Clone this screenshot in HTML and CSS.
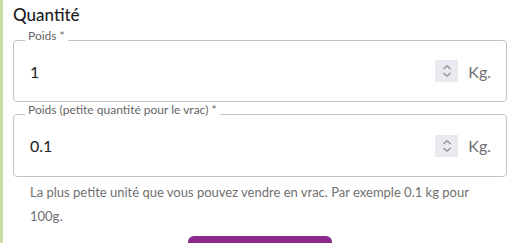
FILE: index.html
```html
<!DOCTYPE html>
<html lang="fr">
<head>
<meta charset="utf-8">
<link rel="stylesheet" href="styles.css">
</head>
<body>
<div class="page">
  <div class="accent"></div>
  <div class="content">
    <h3 class="title">Quantité</h3>
    <div class="field">
      <span class="label">Poids *</span>
      <div class="value">1</div>
      <div class="spin">
        <svg width="12" height="16" viewBox="0 0 12 16"><path d="M2.5 6 L6 2.8 L9.5 6 M2.5 10 L6 13.2 L9.5 10" fill="none" stroke="#8a8a8a" stroke-width="1.2"/></svg>
      </div>
      <span class="unit">Kg.</span>
    </div>
    <div class="field field2">
      <span class="label">Poids (petite quantité pour le vrac) *</span>
      <div class="value">0.1</div>
      <div class="spin">
        <svg width="12" height="16" viewBox="0 0 12 16"><path d="M2.5 6 L6 2.8 L9.5 6 M2.5 10 L6 13.2 L9.5 10" fill="none" stroke="#8a8a8a" stroke-width="1.2"/></svg>
      </div>
      <span class="unit">Kg.</span>
    </div>
    <p class="helper">La plus petite unité que vous pouvez vendre en vrac. Par exemple 0.1 kg pour 100g.</p>
    <div class="actions"><button class="btn" type="button"></button></div>
  </div>
</div>
</body>
</html>
```
FILE: styles.css
```css
html, body {
  margin: 0;
  padding: 0;
  background: #fff;
  font-family: Lato, "Liberation Sans", sans-serif;
  overflow: hidden;
}
.page {
  display: flex;
  height: 243px;
  overflow: hidden;
}
.accent {
  width: 3px;
  flex: none;
  background: #c6dfa3;
}
.content {
  flex: 1;
  padding: 5px 11px 0 10px;
}
.title {
  margin: 0 0 15px;
  font-size: 17px;
  line-height: 20px;
  font-weight: 500;
  color: #1c1c1c;
}
.field {
  position: relative;
  box-sizing: border-box;
  height: 62px;
  border: 1px solid #c4c4c4;
  border-radius: 4px;
  display: flex;
  align-items: center;
  padding: 0 15px 0 16px;
}
.field2 {
  margin-top: 12px;
  height: 63px;
}
.label {
  position: absolute;
  top: -12px;
  left: 11px;
  padding: 0 3px;
  background: #fff;
  font-size: 12px;
  line-height: 14px;
  color: #666;
}
.value {
  flex: 1;
  font-size: 16px;
  color: #222;
}
.spin {
  width: 23px;
  height: 22px;
  background: #e9e9ef;
  display: flex;
  align-items: center;
  justify-content: center;
}
.unit {
  margin-left: 10px;
  font-size: 16px;
  color: #707070;
}
.helper {
  margin: 3px 0 0;
  padding: 0 14px 0 17px;
  font-size: 13px;
  line-height: 24px;
  color: #707070;
}
.actions {
  display: flex;
  padding-left: 175px;
  margin-top: 8px;
}
.btn {
  width: 144px;
  height: 36px;
  border: none;
  border-radius: 6px;
  background: #8b2a8b;
}
```
